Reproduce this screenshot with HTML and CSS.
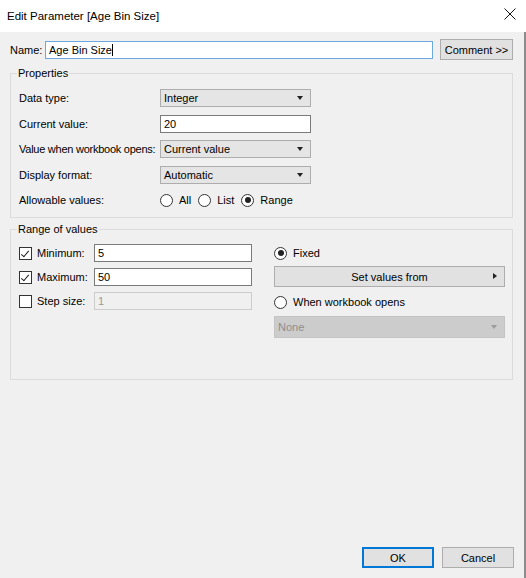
FILE: index.html
```html
<!DOCTYPE html>
<html lang="en">
<head>
  <meta charset="UTF-8">
  <title>Edit Parameter</title>
  <link rel="stylesheet" href="styles.css">
</head>
<body>
  <div class="dialog">
    <div class="titlebar">
      <span class="title">Edit Parameter [Age Bin Size]</span>
      <svg class="close" width="12" height="12" viewBox="0 0 12 12">
        <path d="M0.5 0.5 L11.5 11.5 M11.5 0.5 L0.5 11.5" stroke="#111" stroke-width="1" fill="none"/>
      </svg>
    </div>

    <div class="content">
      <div class="name-row">
        <label class="name-label">Name:</label>
        <div class="textbox name-box focused">Age Bin Size<span class="caret"></span></div>
        <button class="btn comment-btn">Comment &gt;&gt;</button>
      </div>

      <fieldset class="group props">
        <legend>Properties</legend>
        <div class="props-grid">
          <span class="lbl">Data type:</span>
          <div class="combo">Integer<span class="arrow"></span></div>

          <span class="lbl">Current value:</span>
          <div class="textbox">20</div>

          <span class="lbl tight">Value when workbook opens:</span>
          <div class="combo">Current value<span class="arrow"></span></div>

          <span class="lbl">Display format:</span>
          <div class="combo">Automatic<span class="arrow"></span></div>

          <span class="lbl">Allowable values:</span>
          <div class="radios">
            <span class="opt"><span class="radio"></span>All</span>
            <span class="opt"><span class="radio"></span>List</span>
            <span class="opt"><span class="radio on"></span>Range</span>
          </div>
        </div>
      </fieldset>

      <fieldset class="group range">
        <legend>Range of values</legend>
        <div class="range-cols">
          <div class="range-left">
            <div class="check-row">
              <span class="check on"></span><span class="check-lbl">Minimum:</span>
              <div class="textbox range-box">5</div>
            </div>
            <div class="check-row">
              <span class="check on"></span><span class="check-lbl">Maximum:</span>
              <div class="textbox range-box">50</div>
            </div>
            <div class="check-row">
              <span class="check"></span><span class="check-lbl">Step size:</span>
              <div class="textbox range-box disabled">1</div>
            </div>
          </div>
          <div class="range-right">
            <span class="opt"><span class="radio on"></span>Fixed</span>
            <button class="btn set-btn">Set values from<span class="side-arrow"></span></button>
            <span class="opt"><span class="radio"></span>When workbook opens</span>
            <div class="combo disabled">None<span class="arrow"></span></div>
          </div>
        </div>
      </fieldset>

      <div class="footer">
        <button class="btn ok-btn">OK</button>
        <button class="btn">Cancel</button>
      </div>
    </div>
  </div>
</body>
</html>
```

FILE: styles.css
```css
body {
  margin: 0;
  font-family: "Liberation Sans", Arial, sans-serif;
  font-size: 11px;
  color: #000;
  background: #f0f0f0;
}
.dialog {
  width: 526px;
  height: 578px;
  display: flex;
  flex-direction: column;
  overflow: hidden;
}
.titlebar {
  height: 32px;
  flex: none;
  background: #fff;
  display: flex;
  align-items: center;
  justify-content: space-between;
  padding: 0 10px 0 7px;
}
.title { font-size: 11.5px; }
.close { display: block; margin-top: -5px; }

.content {
  flex: 1;
  display: flex;
  flex-direction: column;
  background: #f0f0f0;
  border-right: 2px solid #8c8c8c;
}

/* Name row */
.name-row {
  display: flex;
  align-items: center;
  padding: 7px 11px 0 10px;
  height: 21px;
}
.name-label { width: 35px; }
.name-box { flex: 1; height: 19px; margin-right: 7px; }
.caret { display: inline-block; width: 1px; height: 12px; background: #000; vertical-align: middle; }

/* Controls */
.textbox {
  box-sizing: border-box;
  height: 18px;
  background: #fff;
  border: 1px solid #7a7a7a;
  padding: 0 3px;
  display: flex;
  align-items: center;
}
.textbox.focused { border-color: #6aa8df; }
.textbox.disabled { background: #f0f0f0; border-color: #cccccc; color: #9a9a9a; }
.combo {
  box-sizing: border-box;
  height: 18px;
  background: #e5e5e5;
  border: 1px solid #adadad;
  padding: 0 3px;
  display: flex;
  align-items: center;
  justify-content: space-between;
}
.combo.disabled { background: #cccccc; border-color: #c4c4c4; color: #8e8e8e; height: 22px; }
.arrow {
  width: 0; height: 0;
  border-left: 3.5px solid transparent;
  border-right: 3.5px solid transparent;
  border-top: 4px solid #222;
  margin-right: 4px;
}
.combo.disabled .arrow { border-top-color: #9c9c9c; }
.btn {
  box-sizing: border-box;
  font: inherit;
  background: #e1e1e1;
  border: 1px solid #adadad;
  height: 21px;
  padding: 0;
  color: #000;
}
.comment-btn { width: 73px; }

/* Group boxes */
.group {
  border: 1px solid #dcdcdc;
  margin: 0 11px 0 10px;
  padding: 0 8px;
  min-width: 0;
}
.group legend { padding: 0 1px; margin-left: -2px; }
.props { margin-top: 7px; padding-top: 10px; padding-bottom: 8px; }
.props-grid {
  display: grid;
  grid-template-columns: 141px 151px;
  grid-auto-rows: 18px;
  row-gap: 7.5px;
  align-items: center;
}
.lbl { white-space: nowrap; }
.lbl.tight { letter-spacing: -0.25px; }
.radios { display: flex; gap: 7px; }
.opt { display: inline-flex; align-items: center; gap: 6px; white-space: nowrap; }
.radio {
  box-sizing: border-box;
  width: 13px; height: 13px;
  border: 1px solid #333;
  border-radius: 50%;
  background: #fff;
  position: relative;
}
.radio.on::after {
  content: "";
  position: absolute;
  left: 2.5px; top: 2.5px;
  width: 6px; height: 6px;
  border-radius: 50%;
  background: #222;
}

.range { margin-top: 5px; padding-top: 9px; height: 157px; box-sizing: border-box; }
.range-cols { display: flex; gap: 22px; }
.range-left { display: flex; flex-direction: column; gap: 6px; width: 233px; flex: none; }
.check-row { display: flex; align-items: center; height: 18px; }
.check {
  box-sizing: border-box;
  width: 13px; height: 13px;
  border: 1px solid #333;
  background: #fff;
  position: relative;
  flex: none;
}
.check.on::after {
  content: "";
  position: absolute;
  left: 3px; top: 1px;
  width: 3px; height: 7px;
  border-right: 1px solid #222;
  border-bottom: 1px solid #222;
  transform: rotate(40deg);
}
.check-lbl { width: 57px; padding-left: 5px; white-space: nowrap; }
.range-box { width: 158px; }
.range-right {
  width: 231px;
  display: flex;
  flex-direction: column;
  align-items: flex-start;
}
.range-right .opt { height: 18px; }
.set-btn {
  width: 231px;
  margin: 4px 0 6px;
  position: relative;
}
.side-arrow {
  position: absolute;
  right: 7px; top: 6px;
  width: 0; height: 0;
  border-top: 3.5px solid transparent;
  border-bottom: 3.5px solid transparent;
  border-left: 4px solid #222;
}
.range-right .combo.disabled { width: 231px; margin-top: 5px; }

.footer {
  margin-top: auto;
  display: flex;
  justify-content: flex-end;
  gap: 8px;
  padding: 0 10px 10px 0;
}
.footer .btn { width: 72px; }
.ok-btn { border: 1px solid #0078d7; box-shadow: inset 0 0 0 1px #0078d7; }
```
